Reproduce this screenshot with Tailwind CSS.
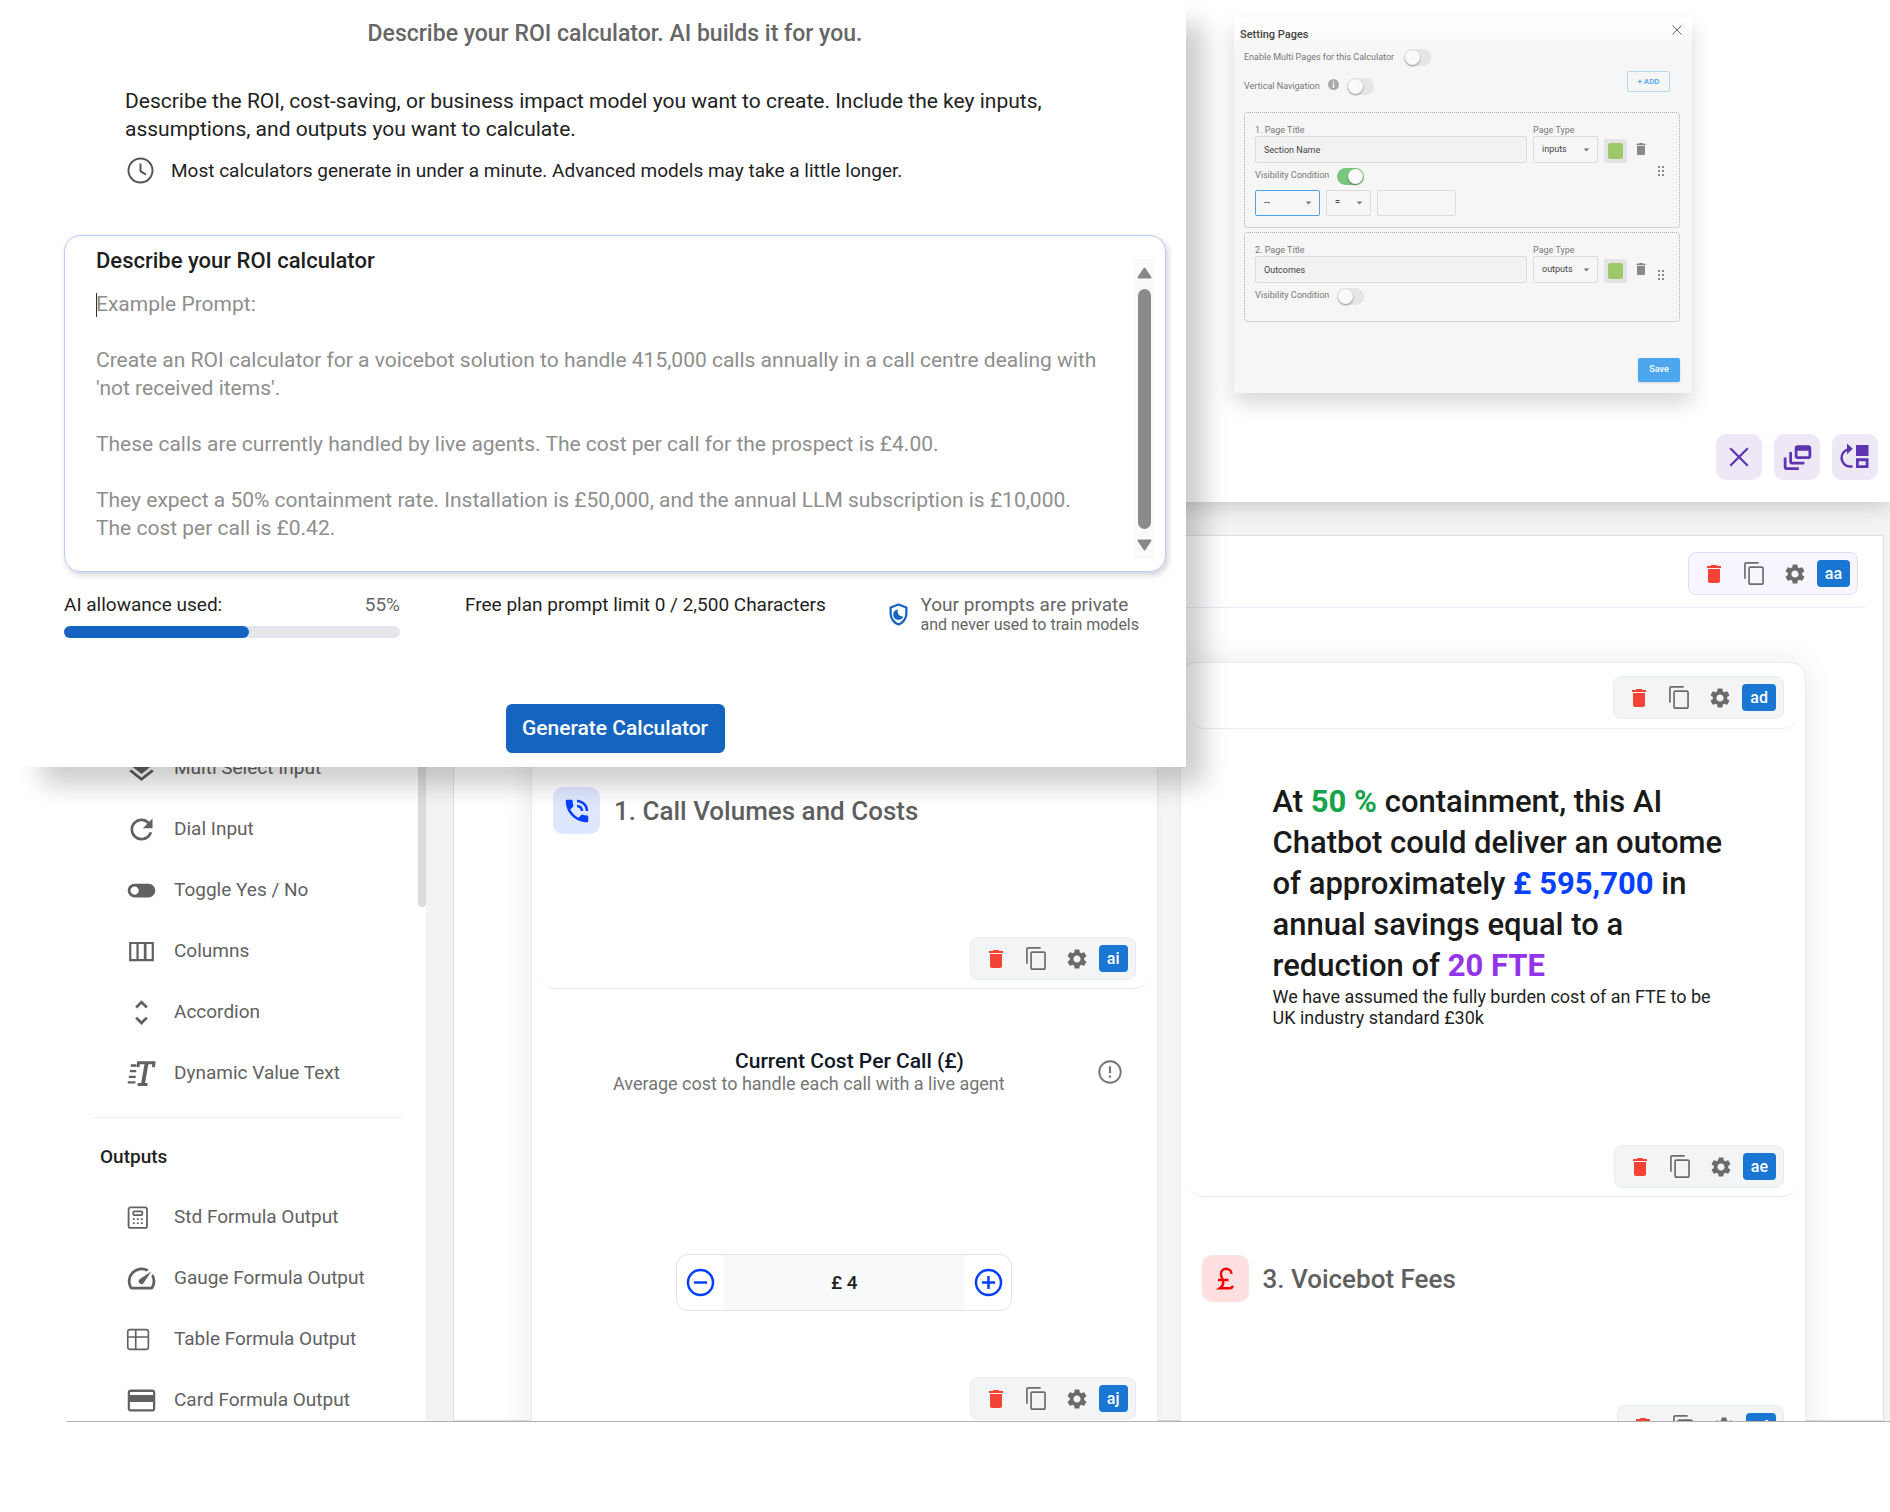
<!DOCTYPE html>
<html lang="en">
<head>
    <meta charset="UTF-8">
    <meta name="viewport" content="width=device-width, initial-scale=1.0">
    <title>ROI Calculator Builder</title>
    <script src="https://cdn.jsdelivr.net/npm/@tailwindcss/browser@4"></script>
</head>
<body class="min-h-screen bg-white font-['Roboto','Liberation_Sans',sans-serif] text-[#1f1f1f]">

    <!-- Icon sprite -->
    <svg class="hidden" aria-hidden="true">
        <symbol id="i-trash" viewBox="0 0 24 24"><path fill="currentColor" d="M6 19c0 1.1.9 2 2 2h8c1.1 0 2-.9 2-2V7H6v12zM19 4h-3.5l-1-1h-5l-1 1H5v2h14V4z"/></symbol>
        <symbol id="i-copy" viewBox="0 0 24 24"><path fill="currentColor" d="M16 1H4c-1.1 0-2 .9-2 2v14h1.6V2.6H16V1zm3 4H8c-1.1 0-2 .9-2 2v14c0 1.1.9 2 2 2h11c1.1 0 2-.9 2-2V7c0-1.1-.9-2-2-2zm.4 16.4H7.6V6.6h11.8v14.8z"/></symbol>
        <symbol id="i-gear" viewBox="0 0 24 24"><path fill="currentColor" d="M19.14 12.94c.04-.3.06-.61.06-.94 0-.32-.02-.64-.07-.94l2.03-1.58c.18-.14.23-.41.12-.61l-1.92-3.32c-.12-.22-.37-.29-.59-.22l-2.39.96c-.5-.38-1.03-.7-1.62-.94l-.36-2.54c-.04-.24-.24-.41-.48-.41h-3.84c-.24 0-.43.17-.47.41l-.36 2.54c-.59.24-1.13.57-1.62.94l-2.39-.96c-.22-.08-.47 0-.59.22L2.74 8.87c-.12.21-.08.47.12.61l2.03 1.58c-.05.3-.09.63-.09.94s.02.64.07.94l-2.03 1.58c-.18.14-.23.41-.12.61l1.92 3.32c.12.22.37.29.59.22l2.39-.96c.5.38 1.03.7 1.62.94l.36 2.54c.05.24.24.41.48.41h3.84c.24 0 .44-.17.47-.41l.36-2.54c.59-.24 1.13-.56 1.62-.94l2.39.96c.22.08.47 0 .59-.22l1.92-3.32c.12-.22.07-.47-.12-.61l-2.01-1.58zM12 15.6c-1.98 0-3.6-1.62-3.6-3.6s1.62-3.6 3.6-3.6 3.6 1.62 3.6 3.6-1.62 3.6-3.6 3.6z"/></symbol>
        <symbol id="i-layers" viewBox="0 0 24 24"><path fill="currentColor" d="M11.99 18.54l-7.37-5.73L3 14.07l9 7 9-7-1.63-1.27-7.38 5.74zM12 16l7.36-5.73L21 9l-9-7-9 7 1.63 1.27L12 16z"/></symbol>
        <symbol id="i-dial" viewBox="0 0 24 24"><path fill="currentColor" d="M17.65 6.35C16.2 4.9 14.21 4 12 4c-4.42 0-7.99 3.58-7.99 8s3.57 8 7.99 8c3.73 0 6.84-2.55 7.73-6h-2.08c-.82 2.33-3.04 4-5.65 4-3.31 0-6-2.69-6-6s2.69-6 6-6c1.66 0 3.14.69 4.22 1.78L13 11h7V4l-2.35 2.35z"/></symbol>
        <symbol id="i-toggle" viewBox="0 0 24 24"><path fill="currentColor" d="M17 7H7c-2.76 0-5 2.24-5 5s2.24 5 5 5h10c2.76 0 5-2.24 5-5s-2.24-5-5-5zM7 15c-1.66 0-3-1.34-3-3s1.34-3 3-3 3 1.34 3 3-1.34 3-3 3z"/></symbol>
        <symbol id="i-columns" viewBox="0 0 24 24"><path fill="currentColor" d="M3 5v14h18V5H3zm5.33 12.5H4.6V6.6h3.73v10.9zm5.34 0h-3.73V6.6h3.73v10.9zm5.73 0h-3.73V6.6h3.73v10.9z"/></symbol>
        <symbol id="i-accordion" viewBox="0 0 24 24"><path fill="currentColor" d="M12 5.83L15.17 9l1.41-1.41L12 3 7.41 7.59 8.83 9 12 5.83zm0 12.34L8.83 15l-1.41 1.41L12 21l4.59-4.59L15.17 15 12 18.17z"/></symbol>
        <symbol id="i-dynamic" viewBox="0 0 24 24"><g fill="none" stroke="currentColor"><path stroke-width="1.7" d="M4.2 6.2h4M3.6 10.3h4.6M2.8 14.4h5M2 18.5h5.6"/><path stroke-width="2.2" d="M9.6 4.2h12.2M9.9 3.2l-.5 4.2M21.2 3.2l-.6 4.2M9.2 20h7.2"/><path stroke-width="2.8" d="M15.8 4l-2.8 16"/></g></symbol>
        <symbol id="i-calc" viewBox="0 0 24 24"><g fill="none" stroke="currentColor" stroke-width="1.3"><rect x="2.6" y="4.6" width="13.4" height="15" rx="1.5"/><rect x="6" y="7.6" width="6.6" height="2.6" rx=".8"/></g><path fill="currentColor" d="M5.7 12.6h1.4v1.2H5.7zM8.6 12.6H10v1.2H8.6zM11.5 12.6h1.4v1.2h-1.4zM5.7 15.6h1.4v1.2H5.7zM8.6 15.6H10v1.2H8.6zM11.5 15.6h1.4v1.2h-1.4z"/></symbol>
        <symbol id="i-gauge" viewBox="0 0 24 24"><path fill="currentColor" d="M20.38 8.57l-1.23 1.85a8 8 0 0 1-.22 7.58H5.07A8 8 0 0 1 15.58 6.85l1.85-1.23A10 10 0 0 0 3.35 19a2 2 0 0 0 1.72 1h13.85a2 2 0 0 0 1.74-1 10 10 0 0 0-.27-10.44zm-9.79 6.84a2 2 0 0 0 2.83 0l5.66-8.49-8.49 5.66a2 2 0 0 0 0 2.83z"/></symbol>
        <symbol id="i-table" viewBox="0 0 24 24"><g fill="none" stroke="currentColor" stroke-width="1.2"><rect x="2" y="4.8" width="15" height="14.4" rx="1.6"/><path d="M7.8 4.8v14.4M2 10.2h15"/></g></symbol>
        <symbol id="i-card" viewBox="0 0 24 24"><path fill="currentColor" d="M20 4H4c-1.11 0-1.99.89-1.99 2L2 18c0 1.11.89 2 2 2h16c1.11 0 2-.89 2-2V6c0-1.11-.89-2-2-2zm.4 14.4H3.6V13h16.8v5.4zm0-10.4H3.6V5.8h16.8V8z"/></symbol>
        <symbol id="i-phone" viewBox="0 0 24 24"><path fill="currentColor" d="M20 15.5c-1.25 0-2.45-.2-3.57-.57-.35-.11-.74-.03-1.02.24l-2.2 2.2c-2.83-1.44-5.15-3.75-6.59-6.59l2.2-2.21c.28-.26.36-.65.25-1C8.7 6.45 8.5 5.25 8.5 4c0-.55-.45-1-1-1H4c-.55 0-1 .45-1 1 0 9.39 7.61 17 17 17 .55 0 1-.45 1-1v-3.5c0-.55-.45-1-1-1zM19 12h2c0-4.97-4.03-9-9-9v2c3.87 0 7 3.13 7 7zm-4 0h2c0-2.76-2.24-5-5-5v2c1.66 0 3 1.34 3 3z"/></symbol>
        <symbol id="i-grip" viewBox="0 0 8 12"><g fill="currentColor"><circle cx="2" cy="2" r="1"/><circle cx="6" cy="2" r="1"/><circle cx="2" cy="6" r="1"/><circle cx="6" cy="6" r="1"/><circle cx="2" cy="10" r="1"/><circle cx="6" cy="10" r="1"/></g></symbol>
        <symbol id="i-caret" viewBox="0 0 8 5"><path fill="currentColor" d="M.5.5h7L4 4.5z"/></symbol>
    </svg>

    <div class="relative">
        <!-- Top panel -->
        <header class="relative z-10 ml-12 flex flex-col items-end bg-white pt-[17px] pb-[22px] shadow-[0_4px_20px_rgba(0,0,0,0.18)]">
            <form class="mr-[198px] w-[458px] bg-linear-to-b from-white to-[#f6f6f6] to-[36px] pr-3 pb-[11px] pl-2.5 text-[9px] text-[#777] shadow-[0_10px_20px_rgba(0,0,0,0.16)]">
                <div class="-ml-1 flex h-8 items-center justify-between">
                    <h2 class="pt-1 text-[11px] font-medium text-[#444]">Setting Pages</h2>
                    <button type="button" aria-label="Close" class="-mr-0.5 mb-1.5 text-[#666]"><svg class="size-[10px]" viewBox="0 0 10 10"><path stroke="currentColor" d="M.5.5l9 9M9.5.5l-9 9"/></svg></button>
                </div>
                <div class="flex items-end justify-between">
                    <div class="flex flex-col gap-3">
                        <label class="flex h-[17px] items-center gap-2.5">Enable Multi Pages for this Calculator
                            <input type="checkbox" class="flex h-[17px] w-[27px] appearance-none rounded-full bg-[#e5e5e5] p-px before:block before:size-[15px] before:rounded-full before:bg-[#fafafa] before:shadow-[0_1px_2px_rgba(0,0,0,0.4)] checked:bg-[#7bc67e] checked:before:ml-auto">
                        </label>
                        <label class="flex h-[17px] items-center gap-2">Vertical Navigation
                            <svg class="mb-1 size-[11px]" viewBox="0 0 12 12"><circle cx="6" cy="6" r="6" fill="#aaa"/><path stroke="#fff" stroke-width="1.5" d="M6 2.5v1.4M6 5v4.5"/></svg>
                            <input type="checkbox" class="flex h-[17px] w-[27px] appearance-none rounded-full bg-[#e5e5e5] p-px before:block before:size-[15px] before:rounded-full before:bg-[#fafafa] before:shadow-[0_1px_2px_rgba(0,0,0,0.4)] checked:bg-[#7bc67e] checked:before:ml-auto">
                        </label>
                    </div>
                    <button type="button" class="mr-2.5 mb-[3px] h-[21px] w-[43px] rounded-xs border border-[#b5d8f5] text-[8px] font-medium text-[#4aa5ec]">+ ADD</button>
                </div>

                <fieldset class="mt-[17px] flex items-center rounded-sm border border-dotted border-[#aaa] pt-3 pr-3.5 pb-[11px] pl-2.5">
                    <div class="flex-1">
                        <div class="flex items-end gap-1.5">
                            <label class="flex-1 leading-[11px]">1. Page Title
                                <input type="text" value="Section Name" class="block h-[27px] w-full rounded-xs border border-[#dcdcdc] bg-[#f2f2f2] px-2 text-[#444]">
                            </label>
                            <label class="w-[65px] leading-[11px]">Page Type
                                <span class="flex items-center">
                                    <select class="h-[27px] w-full appearance-none rounded-xs border border-[#dcdcdc] px-2 text-[#444]"><option>inputs</option><option>outputs</option></select>
                                    <svg class="-ml-[15px] h-1 w-[7px]"><use href="#i-caret"/></svg>
                                </span>
                            </label>
                            <input type="color" value="#9cc869" aria-label="Page 1 colour" class="h-6 w-[23px] appearance-none rounded-xs bg-[#e4e4e8] p-1 [&::-webkit-color-swatch-wrapper]:p-0 [&::-webkit-color-swatch]:rounded-xs [&::-webkit-color-swatch]:border-0">
                            <button type="button" aria-label="Delete page 1" class="mb-1.5 text-[#888]"><svg class="size-4"><use href="#i-trash"/></svg></button>
                        </div>
                        <label class="mt-1 flex h-[18px] items-center gap-2">Visibility Condition
                            <input type="checkbox" checked class="flex h-[17px] w-[27px] appearance-none rounded-full bg-[#e5e5e5] p-px before:block before:size-[15px] before:rounded-full before:bg-[#fafafa] before:shadow-[0_1px_2px_rgba(0,0,0,0.4)] checked:bg-[#7bc67e] checked:before:ml-auto">
                        </label>
                        <div class="mt-[5px] flex items-center gap-1.5">
                            <span class="flex items-center">
                                <select aria-label="Condition field" class="h-[26px] w-[65px] appearance-none rounded-xs border border-[#4aa5ec] px-2 font-medium text-[#444]"><option>--</option></select>
                                <svg class="-ml-[15px] mr-2 h-1 w-[7px]"><use href="#i-caret"/></svg>
                            </span>
                            <span class="flex items-center">
                                <select aria-label="Condition operator" class="h-[26px] w-[45px] appearance-none rounded-xs border border-[#dcdcdc] px-2 font-medium text-[#444]"><option>=</option></select>
                                <svg class="-ml-[15px] mr-2 h-1 w-[7px]"><use href="#i-caret"/></svg>
                            </span>
                            <input type="text" aria-label="Condition value" class="h-[26px] w-[79px] rounded-xs border border-[#dcdcdc] px-2">
                        </div>
                    </div>
                    <svg class="ml-2 h-3 w-2 text-[#666]"><use href="#i-grip"/></svg>
                </fieldset>

                <fieldset class="mt-1 flex items-center rounded-sm border border-dotted border-[#aaa] pt-3 pr-3.5 pb-4 pl-2.5">
                    <div class="flex-1">
                        <div class="flex items-end gap-1.5">
                            <label class="flex-1 leading-[11px]">2. Page Title
                                <input type="text" value="Outcomes" class="block h-[27px] w-full rounded-xs border border-[#dcdcdc] bg-[#f2f2f2] px-2 text-[#444]">
                            </label>
                            <label class="w-[65px] leading-[11px]">Page Type
                                <span class="flex items-center">
                                    <select class="h-[27px] w-full appearance-none rounded-xs border border-[#dcdcdc] px-2 text-[#444]"><option>outputs</option><option>inputs</option></select>
                                    <svg class="-ml-[15px] h-1 w-[7px]"><use href="#i-caret"/></svg>
                                </span>
                            </label>
                            <input type="color" value="#9cc869" aria-label="Page 2 colour" class="h-6 w-[23px] appearance-none rounded-xs bg-[#e4e4e8] p-1 [&::-webkit-color-swatch-wrapper]:p-0 [&::-webkit-color-swatch]:rounded-xs [&::-webkit-color-swatch]:border-0">
                            <button type="button" aria-label="Delete page 2" class="mb-1.5 text-[#888]"><svg class="size-4"><use href="#i-trash"/></svg></button>
                        </div>
                        <label class="mt-1 flex h-[18px] items-center gap-2">Visibility Condition
                            <input type="checkbox" class="flex h-[17px] w-[27px] appearance-none rounded-full bg-[#e5e5e5] p-px before:block before:size-[15px] before:rounded-full before:bg-[#fafafa] before:shadow-[0_1px_2px_rgba(0,0,0,0.4)] checked:bg-[#7bc67e] checked:before:ml-auto">
                        </label>
                    </div>
                    <svg class="ml-2 h-3 w-2 text-[#666]"><use href="#i-grip"/></svg>
                </fieldset>

                <div class="mt-9 flex justify-end">
                    <button type="button" class="h-6 w-[42px] rounded-xs bg-[#4ca7ef] font-medium text-white shadow-sm">Save</button>
                </div>
            </form>

            <div class="mt-[41px] mr-3 flex gap-3 text-[#5e35b1]">
                <button aria-label="Close builder" class="grid size-[46px] place-items-center rounded-[10px] bg-[#ede7f6]"><svg class="size-[30px]" viewBox="0 0 24 24"><path fill="none" stroke="currentColor" stroke-width="1.8" d="M5 5l14 14M19 5L5 19"/></svg></button>
                <button aria-label="Pages" class="grid size-[46px] place-items-center rounded-[10px] bg-[#ede7f6]"><svg class="size-[33px]" viewBox="0 0 24 24"><path fill="currentColor" d="M8 8H6v7c0 1.1.9 2 2 2h9v-2H8V8z M20 3h-8c-1.1 0-2 .9-2 2v6c0 1.1.9 2 2 2h8c1.1 0 2-.9 2-2V5c0-1.1-.9-2-2-2zm0 8h-8V7h8v4z M4 12H2v7c0 1.1.9 2 2 2h9v-2H4v-7z"/></svg></button>
                <button aria-label="Rearrange" class="grid size-[46px] place-items-center rounded-[10px] bg-[#ede7f6]"><svg class="size-8" viewBox="0 0 32 32"><path fill="none" stroke="currentColor" stroke-width="2.5" d="M13.5 25.6h-2.2A8.8 8.8 0 0 1 9.5 8.2"/><path fill="currentColor" d="M8 2.5l5.8 5.3L8 13.3zM17 4h12.5v11H17z"/><path fill="currentColor" fill-rule="evenodd" d="M17 17.3h12.5V27H17zm2.8 3v3.9h6.9v-3.9z"/></svg></button>
            </div>
        </header>

        <!-- Builder -->
        <main class="ml-[67px] flex h-[920px] overflow-hidden border-b border-[#b5aeab]">
            <aside class="relative w-[359px] shrink-0 bg-white pt-[236px]">
                <ul id="input-items"></ul>
                <hr class="mt-[13px] mr-[23px] ml-[25px] border-[#eeeeee]">
                <h3 class="mt-[27px] ml-[33px] text-[19px] leading-[24px] font-medium">Outputs</h3>
                <ul id="output-items" class="mt-[18px]"></ul>
                <div class="absolute top-0 right-0 h-[405px] w-2 rounded-full bg-[#dcdcdc]"></div>
            </aside>

            <div class="flex-1 bg-[#f2f3f5] pt-[33px] pr-1.5 pl-[27px]">
                <div class="h-full border border-[#dee0e3] bg-white">
                    <div class="mr-[9px] flex h-[72px] justify-end rounded-br-2xl border-b border-[#eaeef4] pt-4 pr-4">
                        <div data-toolbar="aa"></div>
                    </div>

                    <div class="grid h-[860px] grid-cols-2 gap-[22px] px-[77px] pt-[54px]">
                        <section class="rounded-2xl border border-[#e8eaec] bg-white px-[7px] shadow-[0_0_32px_rgba(0,20,20,0.09)]">
                            <div class="h-[66px] rounded-b-2xl border-b border-[#eaedf1]"></div>
                            <div class="flex h-[260px] flex-col justify-between rounded-b-2xl border-b border-[#eaedf1] pt-[58px] pr-[14px] pb-2 pl-[14px]">
                                <div class="flex items-center gap-[14px]">
                                    <span class="grid size-[47px] place-items-center rounded-[10px] bg-[#dfe7ff] text-[#0540ff]"><svg class="size-[30px]"><use href="#i-phone"/></svg></span>
                                    <h2 class="text-[26px] leading-[38px] font-medium text-[#5f5f5f]">1. Call Volumes and Costs</h2>
                                </div>
                                <div class="flex justify-end"><div data-toolbar="ai"></div></div>
                            </div>
                            <div class="flex h-[440px] flex-col rounded-b-2xl border-b border-[#eaedf1] pt-[60px] pb-2">
                                <div class="flex items-center pl-[74px]">
                                    <div class="w-[473px]">
                                        <h3 class="text-center text-[21px] leading-6 font-medium text-[#111827]">Current Cost Per Call (£)</h3>
                                        <p class="text-[18px] leading-[22px] text-[#757575]">Average cost to handle each call with a live agent</p>
                                    </div>
                                    <svg class="ml-[10px] size-[28px] shrink-0 text-[#757575]" viewBox="0 0 24 24"><circle cx="12" cy="12" r="9.2" fill="none" stroke="currentColor" stroke-width="1.6"/><path stroke="currentColor" stroke-width="1.8" d="M12 7v6M12 15v2"/></svg>
                                </div>
                                <div class="mx-auto mt-[159px] flex h-[57px] w-[336px] items-center rounded-xl border border-[#e2e4e6] text-[#0540ff]">
                                    <button aria-label="Decrease" class="grid w-[46px] place-items-center"><svg class="size-[33px]" viewBox="0 0 24 24"><g fill="none" stroke="currentColor" stroke-width="1.8"><circle cx="12" cy="12" r="9.1"/><path d="M7.2 12h9.6"/></g></svg></button>
                                    <input type="text" value="£ 4" aria-label="Current cost per call" class="h-full min-w-0 flex-1 bg-[#f8faf9] text-center text-[19px] font-medium text-[#1f1f1f]">
                                    <button aria-label="Increase" class="grid w-[46px] place-items-center"><svg class="size-[33px]" viewBox="0 0 24 24"><g fill="none" stroke="currentColor" stroke-width="1.8"><circle cx="12" cy="12" r="9.1"/><path d="M7.2 12h9.6M12 7.2v9.6"/></g></svg></button>
                                </div>
                                <div class="mt-auto flex justify-end pr-[14px]"><div data-toolbar="aj"></div></div>
                            </div>
                        </section>

                        <section class="rounded-2xl border border-[#e8eaec] bg-white px-[7px] shadow-[0_0_32px_rgba(0,20,20,0.09)]">
                            <div class="flex h-[66px] justify-end rounded-b-2xl border-b border-[#eaedf1] pt-[13px] pr-[14px]">
                                <div data-toolbar="ad"></div>
                            </div>
                            <div class="flex h-[468px] flex-col justify-between rounded-b-2xl border-b border-[#eaedf1] pt-[52px] pr-[14px] pb-2 pl-[85px]">
                                <div class="pr-[46px]">
                                    <p class="text-[31px] leading-[41px] font-medium text-[#1a1a1a]">At <span class="font-bold text-[#16a34a]">50 %</span> containment, this AI Chatbot could deliver an outome of approximately <span class="font-bold text-[#0540ff]">£ 595,700</span> in annual savings equal to a reduction of <span class="font-bold text-[#9333ea]">20 FTE</span></p>
                                    <p class="text-[18px] leading-[21px]">We have assumed the fully burden cost of an FTE to be<br>UK industry standard £30k</p>
                                </div>
                                <div class="flex justify-end"><div data-toolbar="ae"></div></div>
                            </div>
                            <div class="flex h-[260px] flex-col justify-between rounded-b-2xl border-b border-[#eaedf1] pt-[58px] pr-[14px] pb-2 pl-[14px]">
                                <div class="flex items-center gap-[14px]">
                                    <span class="grid size-[47px] place-items-center rounded-[10px] bg-[#ffe0e0] text-[#ff0000]"><svg class="size-[28px]" viewBox="0 0 24 24"><path fill="none" stroke="currentColor" stroke-width="2.1" d="M17.5 7.5a4.5 4.5 0 0 0-9 .3c0 2.6 2 4.2 2 7.2 0 2.2-1 3.6-3 5h8.500c1.5 0 2.3-.8 2.6-2.2M6 12.8h9"/></svg></span>
                                    <h2 class="text-[26px] leading-[38px] font-medium text-[#5f5f5f]">3. Voicebot Fees</h2>
                                </div>
                                <div class="flex justify-end"><div data-toolbar="af"></div></div>
                            </div>
                        </section>
                    </div>
                </div>
            </div>
        </main>

        <!-- Prompt dialog -->
        <section role="dialog" aria-labelledby="dialog-title" class="absolute top-0 left-[18px] z-20 w-[61.8%] bg-white pr-5 pb-[14px] pl-[46px] shadow-[21px_21px_24px_-3px_rgba(0,0,0,0.2)]">
            <h1 id="dialog-title" class="pt-[19px] text-center text-[23px] leading-[30px] font-medium text-[#666]">Describe your ROI calculator. AI builds it for you.</h1>
            <div class="mt-[38px] pr-20 pl-[61px]">
                <p class="text-[21px] leading-7 text-[#222]">Describe the ROI, cost-saving, or business impact model you want to create. Include the key inputs, assumptions, and outputs you want to calculate.</p>
                <p class="mt-3 flex items-center gap-[15px] text-[19px] leading-7 text-[#222]">
                    <svg class="size-[31px]" viewBox="0 0 24 24"><g fill="none" stroke="#555" stroke-width="1.5"><circle cx="12" cy="12" r="9.3"/><path d="M12 6.5v6l4.2 2.7"/></g></svg>
                    Most calculators generate in under a minute. Advanced models may take a little longer.
                </p>
            </div>

            <div class="relative mt-[49px] flex rounded-2xl border border-[#b9c9fb] pt-[11px] pr-[10px] pb-3 pl-[31px] shadow-[2px_3px_6px_rgba(0,0,0,0.18)]">
                <div class="flex-1">
                    <label for="prompt" class="block text-[22px] leading-7 font-medium">Describe your ROI calculator</label>
                    <textarea id="prompt" class="mt-[15px] block h-[269px] w-full resize-none overflow-hidden pr-7 text-[21px] leading-7 outline-none placeholder:text-[#8e8e8e]" placeholder="Example Prompt:&#10;&#10;Create an ROI calculator for a voicebot solution to handle 415,000 calls annually in a call centre dealing with 'not received items'.&#10;&#10;These calls are currently handled by live agents. The cost per call for the prospect is £4.00.&#10;&#10;They expect a 50% containment rate. Installation is £50,000, and the annual LLM subscription is £10,000. The cost per call is £0.42."></textarea>
                    <div class="absolute top-[57px] left-[31px] h-6 w-px bg-[#333]"></div>
                </div>
                <div class="mt-3 flex w-[22px] flex-col items-center gap-2.5 bg-[#fafafa] py-2 text-[#888]">
                    <svg class="h-3 w-[15px]" viewBox="0 0 15 12"><path fill="currentColor" stroke="currentColor" stroke-width="2" stroke-linejoin="round" d="M7.5 1.5L13.5 10.5h-12z"/></svg>
                    <div class="w-[13px] flex-1 rounded-full bg-[#8a8a8a]"></div>
                    <svg class="h-3 w-[15px]" viewBox="0 0 15 12"><path fill="currentColor" stroke="currentColor" stroke-width="2" stroke-linejoin="round" d="M7.5 10.5L13.5 1.5h-12z"/></svg>
                </div>
            </div>

            <div class="mt-[22px] flex text-[19px] leading-[22px]">
                <div class="w-[336px]">
                    <div class="flex justify-between"><span id="allowance">AI allowance used:</span><span class="text-[#666]">55%</span></div>
                    <div role="progressbar" aria-labelledby="allowance" aria-valuenow="55" class="mt-[10px] h-3 rounded-full bg-[#e5e6eb]">
                        <div class="h-full rounded-full bg-[#1565c0]" style="width: 55%"></div>
                    </div>
                </div>
                <p class="ml-[65px]">Free plan prompt limit 0 / 2,500 Characters</p>
                <div class="mr-[27px] ml-auto flex items-center gap-2 self-start text-[#666]">
                    <svg class="size-[27px]" viewBox="0 0 24 24"><path fill="none" stroke="#1565c0" stroke-width="2" stroke-linejoin="round" d="M12 3.1l7 2.7V11c0 4.5-3 8.5-7 9.9-4-1.4-7-5.4-7-9.9V5.8z"/><path fill="#1565c0" d="M11.5 7.5a4.6 4.6 0 1 0 4.7 6.3 4.6 4.6 0 0 1-4.7-6.3z"/></svg>
                    <p>Your prompts are private<span class="block text-[16px] leading-[18px]">and never used to train models</span></p>
                </div>
            </div>

            <div class="mt-[66px] text-center">
                <button class="h-[49px] w-[219px] rounded-md bg-[#1565c0] text-[21px] font-medium text-white">Generate Calculator</button>
            </div>
        </section>
    </div>

    <script>
        const inputItems = [
            { icon: 'i-layers', label: 'Multi Select Input' },
            { icon: 'i-dial', label: 'Dial Input' },
            { icon: 'i-toggle', label: 'Toggle Yes / No' },
            { icon: 'i-columns', label: 'Columns' },
            { icon: 'i-accordion', label: 'Accordion' },
            { icon: 'i-dynamic', label: 'Dynamic Value Text' },
        ];
        const outputItems = [
            { icon: 'i-calc', label: 'Std Formula Output' },
            { icon: 'i-gauge', label: 'Gauge Formula Output' },
            { icon: 'i-table', label: 'Table Formula Output' },
            { icon: 'i-card', label: 'Card Formula Output' },
        ];

        function renderItems(id, items) {
            document.getElementById(id).innerHTML = items.map(item => `
                <li class="flex h-[61px] items-center gap-4 pl-[58px] text-[19px] text-[#616161]">
                    <svg class="size-[33px]"><use href="#${item.icon}"/></svg>
                    <span>${item.label}</span>
                </li>
            `).join('');
        }

        function renderToolbar(el) {
            const id = el.dataset.toolbar;
            // the page root is tinted, nested blocks are grey
            const tint = id === 'aa' ? 'border-[#e4dbf8] bg-[#f8f5ff]' : 'border-[#e8ecf2] bg-[#f3f4f6]';
            el.innerHTML = `
                <div class="flex h-[43px] items-center rounded-lg border pr-[7px] pl-[5px] text-[#6b6b6b] ${tint}">
                    <button aria-label="Delete ${id}" class="grid w-10 place-items-center text-[#f44336]"><svg class="size-6"><use href="#i-trash"/></svg></button>
                    <button aria-label="Copy ${id}" class="grid w-[41px] place-items-center"><svg class="size-[25px]"><use href="#i-copy"/></svg></button>
                    <button aria-label="Settings ${id}" class="grid w-10 place-items-center"><svg class="size-6"><use href="#i-gear"/></svg></button>
                    <span class="ml-0.5 rounded-sm bg-[#1976d2] px-2 text-[16px] leading-[27px] font-medium text-white">${id}</span>
                </div>
            `;
        }

        renderItems('input-items', inputItems);
        renderItems('output-items', outputItems);
        document.querySelectorAll('[data-toolbar]').forEach(renderToolbar);
    </script>
</body>
</html>
